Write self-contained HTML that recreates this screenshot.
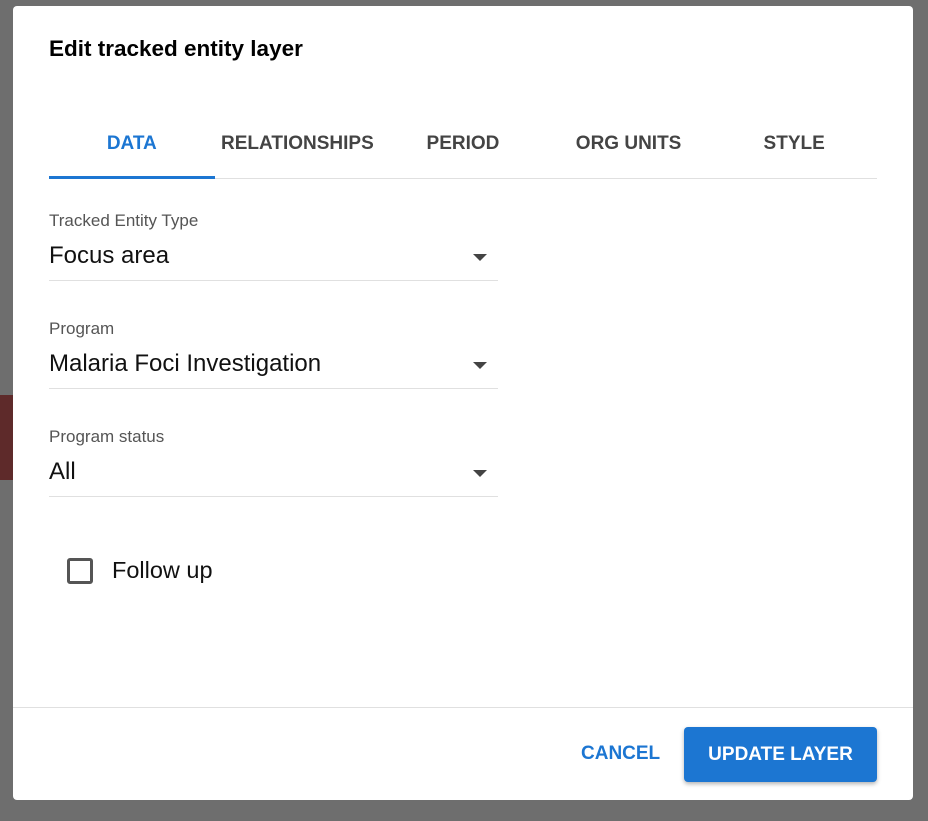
<!DOCTYPE html>
<html><head><style>
body{margin:0;width:928px;height:821px;background:#6e6e6e;position:relative;overflow:hidden;font-family:"Liberation Sans",sans-serif;}
.red{position:absolute;left:0;top:395px;width:13px;height:85px;background:#5e2a2a;}
.dlg{position:absolute;left:13px;top:6px;width:900px;height:794px;background:#fff;border-radius:4px;}
.t{position:absolute;left:36px;top:30px;font-size:22.5px;font-weight:bold;color:#000;}
.tabs{position:absolute;left:36px;top:120px;width:828px;height:52px;border-bottom:1px solid #e0e0e0;display:flex;}
.tab{flex:1;text-align:center;font-size:19px;font-weight:bold;color:#444;line-height:34px;padding-top:1px;}
.tab.a{color:#1c76d2;border-bottom:3px solid #1c76d2;height:49px;}
.f{position:absolute;left:36px;width:449px;border-bottom:1px solid #e0e0e0;height:92px;}
.l{position:absolute;font-size:17px;color:#555;}
.v{position:absolute;font-size:24px;color:#111;}
.ar{position:absolute;right:11px;width:0;height:0;border-left:7px solid transparent;border-right:7px solid transparent;border-top:7px solid #444;}
.cb{position:absolute;left:67px;top:558px;width:26px;height:26px;border:3px solid #555;border-radius:3px;box-sizing:border-box;}
.fu{position:absolute;left:112px;top:557px;font-size:23.5px;color:#111;}
.div{position:absolute;left:0;top:701px;width:900px;height:1px;background:#e0e0e0;}
.cancel{position:absolute;left:568px;top:737px;font-size:19px;font-weight:bold;color:#1c76d2;}
.btn{position:absolute;left:671px;top:721px;width:193px;height:55px;background:#1c76d2;border-radius:4px;box-shadow:0 2px 4px rgba(0,0,0,.3);color:#fff;font-size:19px;font-weight:bold;text-align:center;line-height:55px;}
</style></head><body>
<div class="red"></div>
<div class="dlg">
<div class="t">Edit tracked entity layer</div>
<div class="tabs"><div class="tab a">DATA</div><div class="tab">RELATIONSHIPS</div><div class="tab">PERIOD</div><div class="tab">ORG UNITS</div><div class="tab">STYLE</div></div>
<div class="f" style="top:182px"><div class="l" style="top:23px">Tracked Entity Type</div><div class="v" style="top:54px">Focus area</div><div class="ar" style="top:66px"></div></div>
<div class="f" style="top:290px"><div class="l" style="top:23px">Program</div><div class="v" style="top:54px">Malaria Foci Investigation</div><div class="ar" style="top:66px"></div></div>
<div class="f" style="top:398px"><div class="l" style="top:23px">Program status</div><div class="v" style="top:54px">All</div><div class="ar" style="top:66px"></div></div>
<div class="div"></div>
<div class="cancel">CANCEL</div>
<div class="btn">UPDATE LAYER</div>
</div>
<div class="cb"></div>
<div class="fu">Follow up</div>
</body></html>
